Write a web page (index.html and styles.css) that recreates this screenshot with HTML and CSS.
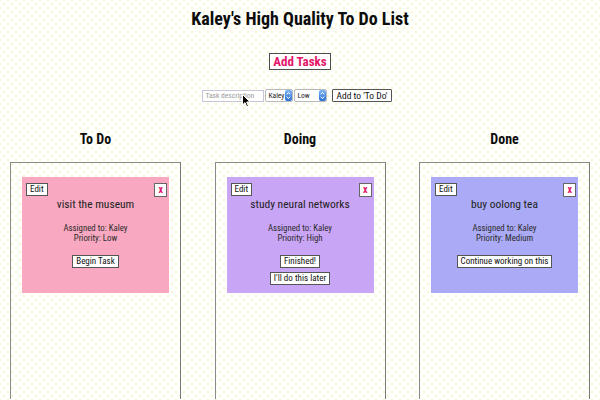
FILE: index.html
```html
<!DOCTYPE html>
<html>
<head>
<meta charset="utf-8">
<title>Kaley's High Quality To Do List</title>
<link rel="stylesheet" href="styles.css">
</head>
<body>
<h1 class="title">Kaley's High Quality To Do List</h1>
<div class="add-wrap"><button class="add-tasks">Add Tasks</button></div>
<form class="task-form">
  <input class="task-input" type="text" placeholder="Task description">
  <span class="select sel-person"><select><option>Kaley</option></select><span class="arrow"><svg width="5" height="9" viewBox="0 0 5 9"><path d="M0.8 3.4 L2.5 1.4 L4.2 3.4 M0.8 5.6 L2.5 7.6 L4.2 5.6" fill="none" stroke="#fff" stroke-width="1"/></svg></span></span>
  <span class="select sel-priority"><select><option>Low</option></select><span class="arrow"><svg width="5" height="9" viewBox="0 0 5 9"><path d="M0.8 3.4 L2.5 1.4 L4.2 3.4 M0.8 5.6 L2.5 7.6 L4.2 5.6" fill="none" stroke="#fff" stroke-width="1"/></svg></span></span>
  <button class="add-btn" type="button">Add to 'To Do'</button>
</form>
<svg class="cursor" width="9" height="14" viewBox="0 0 9 14"><path d="M0.5 0.5 L0.5 11 L3 8.6 L4.8 12.8 L6.4 12.1 L4.7 8 L8 8 Z" fill="#000" stroke="#fff" stroke-width="1"/></svg>
<main class="board">
  <section class="column">
    <h2 class="col-title">To Do</h2>
    <div class="col-box">
      <article class="card card-todo">
        <div class="card-top"><button class="btn-edit">Edit</button><button class="btn-x">x</button></div>
        <div class="card-title">visit the museum</div>
        <div class="card-meta">Assigned to: Kaley<br>Priority: Low</div>
        <div class="card-actions"><button class="btn">Begin Task</button></div>
      </article>
    </div>
  </section>
  <section class="column">
    <h2 class="col-title">Doing</h2>
    <div class="col-box">
      <article class="card card-doing">
        <div class="card-top"><button class="btn-edit">Edit</button><button class="btn-x">x</button></div>
        <div class="card-title">study neural networks</div>
        <div class="card-meta">Assigned to: Kaley<br>Priority: High</div>
        <div class="card-actions"><button class="btn">Finished!</button><button class="btn">I'll do this later</button></div>
      </article>
    </div>
  </section>
  <section class="column">
    <h2 class="col-title">Done</h2>
    <div class="col-box">
      <article class="card card-done">
        <div class="card-top"><button class="btn-edit">Edit</button><button class="btn-x">x</button></div>
        <div class="card-title">buy oolong tea</div>
        <div class="card-meta">Assigned to: Kaley<br>Priority: Medium</div>
        <div class="card-actions"><button class="btn">Continue working on this</button></div>
      </article>
    </div>
  </section>
</main>
</body>
</html>
```
FILE: styles.css
```css
html, body {
  margin: 0;
  height: 400px;
  overflow: hidden;
}
body {
  position: relative;
  padding-top: 8px;
  box-sizing: border-box;
  font-family: "Roboto Condensed", "Liberation Sans Narrow", "Liberation Sans", sans-serif;
  color: #111;
  background-color: #fffffb;
  background-image:
    radial-gradient(circle, #f3f0c2 0 0.6px, transparent 0.9px),
    radial-gradient(circle, #f3f0c2 0 0.6px, transparent 0.9px);
  background-size: 8px 8px, 8px 8px;
  background-position: 0 0, 4px 4px;
}
button, input, select {
  font-family: inherit;
  margin: 0;
}
.title {
  margin: 0;
  font-size: 18px;
  line-height: 22px;
  font-weight: bold;
  text-align: center;
  color: #0d0d0d;
}
.add-wrap {
  display: flex;
  justify-content: center;
  margin-top: 23px;
}
.add-tasks {
  font-size: 13px;
  line-height: 15px;
  font-weight: bold;
  color: #e3166a;
  background: #fff;
  border: 1px solid #4d4d4d;
  padding: 0 3px;
  border-radius: 0;
}
.task-form {
  display: flex;
  justify-content: center;
  align-items: center;
  gap: 1px;
  margin: 19px 0 0;
  height: 13px;
  padding-right: 6px;
}
.task-input {
  width: 62px;
  height: 12px;
  box-sizing: border-box;
  border: 1px solid #c6c6d8;
  padding: 0 2px;
  font-size: 7.5px;
  background: #fff;
  outline: none;
}
.task-input::placeholder {
  color: #9a9a9a;
}
.select {
  display: inline-flex;
  align-items: center;
  height: 13px;
  box-sizing: border-box;
  border: 1px solid #b9b9b9;
  border-radius: 2px;
  background: #fff;
}
.sel-person { width: 28px; }
.sel-priority { width: 33px; }
.select select {
  appearance: none;
  -webkit-appearance: none;
  border: 0;
  background: transparent;
  font-size: 7.5px;
  line-height: 11px;
  height: 11px;
  padding: 0 0 0 2px;
  flex: 1;
  min-width: 0;
  color: #222;
  outline: none;
}
.arrow {
  width: 7px;
  height: 11px;
  flex: none;
  border-radius: 2px;
  background: linear-gradient(#7bb4f5, #2b6fd6);
  display: flex;
  align-items: center;
  justify-content: center;
}
.arrow svg { display: block; }
.add-btn {
  margin-left: 4px;
  height: 13px;
  box-sizing: border-box;
  font-size: 9.5px;
  line-height: 11px;
  padding: 0 3px;
  border: 1px solid #555;
  border-radius: 1px;
  background: #fff;
  color: #111;
}
.cursor {
  position: absolute;
  left: 242px;
  top: 94px;
}
.board {
  display: grid;
  grid-template-columns: repeat(3, 171px);
  column-gap: 33.5px;
  justify-content: center;
  margin-top: 29px;
}
.col-title {
  margin: 0 0 14px;
  font-size: 14px;
  line-height: 17px;
  font-weight: bold;
  text-align: center;
  color: #0d0d0d;
}
.col-box {
  height: 237px;
  box-sizing: border-box;
  border: 1px solid #8a8a8a;
  border-right-color: #7a7a7a;
  border-bottom: 0;
  padding: 14px 11px 0;
}
.card {
  height: 116px;
  box-sizing: border-box;
  padding-top: 6px;
  text-align: center;
  color: #222;
}
.card-todo { background: #f8a9c1; }
.card-doing { background: #c9a5f5; }
.card-done { background: #aaaaf6; }
.card-top {
  display: flex;
  justify-content: space-between;
  align-items: flex-start;
  padding: 0 2px 0 4px;
  height: 14px;
}
.btn-edit, .btn, .btn-x {
  background: #fff;
  border: 1px solid #555;
  border-radius: 0;
  color: #111;
  font-size: 9px;
  line-height: 11px;
  padding: 0 3px;
}
.btn-x {
  color: #e3166a;
  font-weight: bold;
  font-size: 10px;
  line-height: 12px;
  padding: 0 3px;
  border-color: #666;
}
.card-title {
  font-size: 11.5px;
  line-height: 14px;
}
.card-meta {
  margin-top: 11.5px;
  font-size: 8.8px;
  line-height: 10px;
  color: #2a2a2a;
}
.card-actions {
  margin-top: 12px;
  display: flex;
  flex-direction: column;
  align-items: center;
  gap: 4.5px;
}
```
